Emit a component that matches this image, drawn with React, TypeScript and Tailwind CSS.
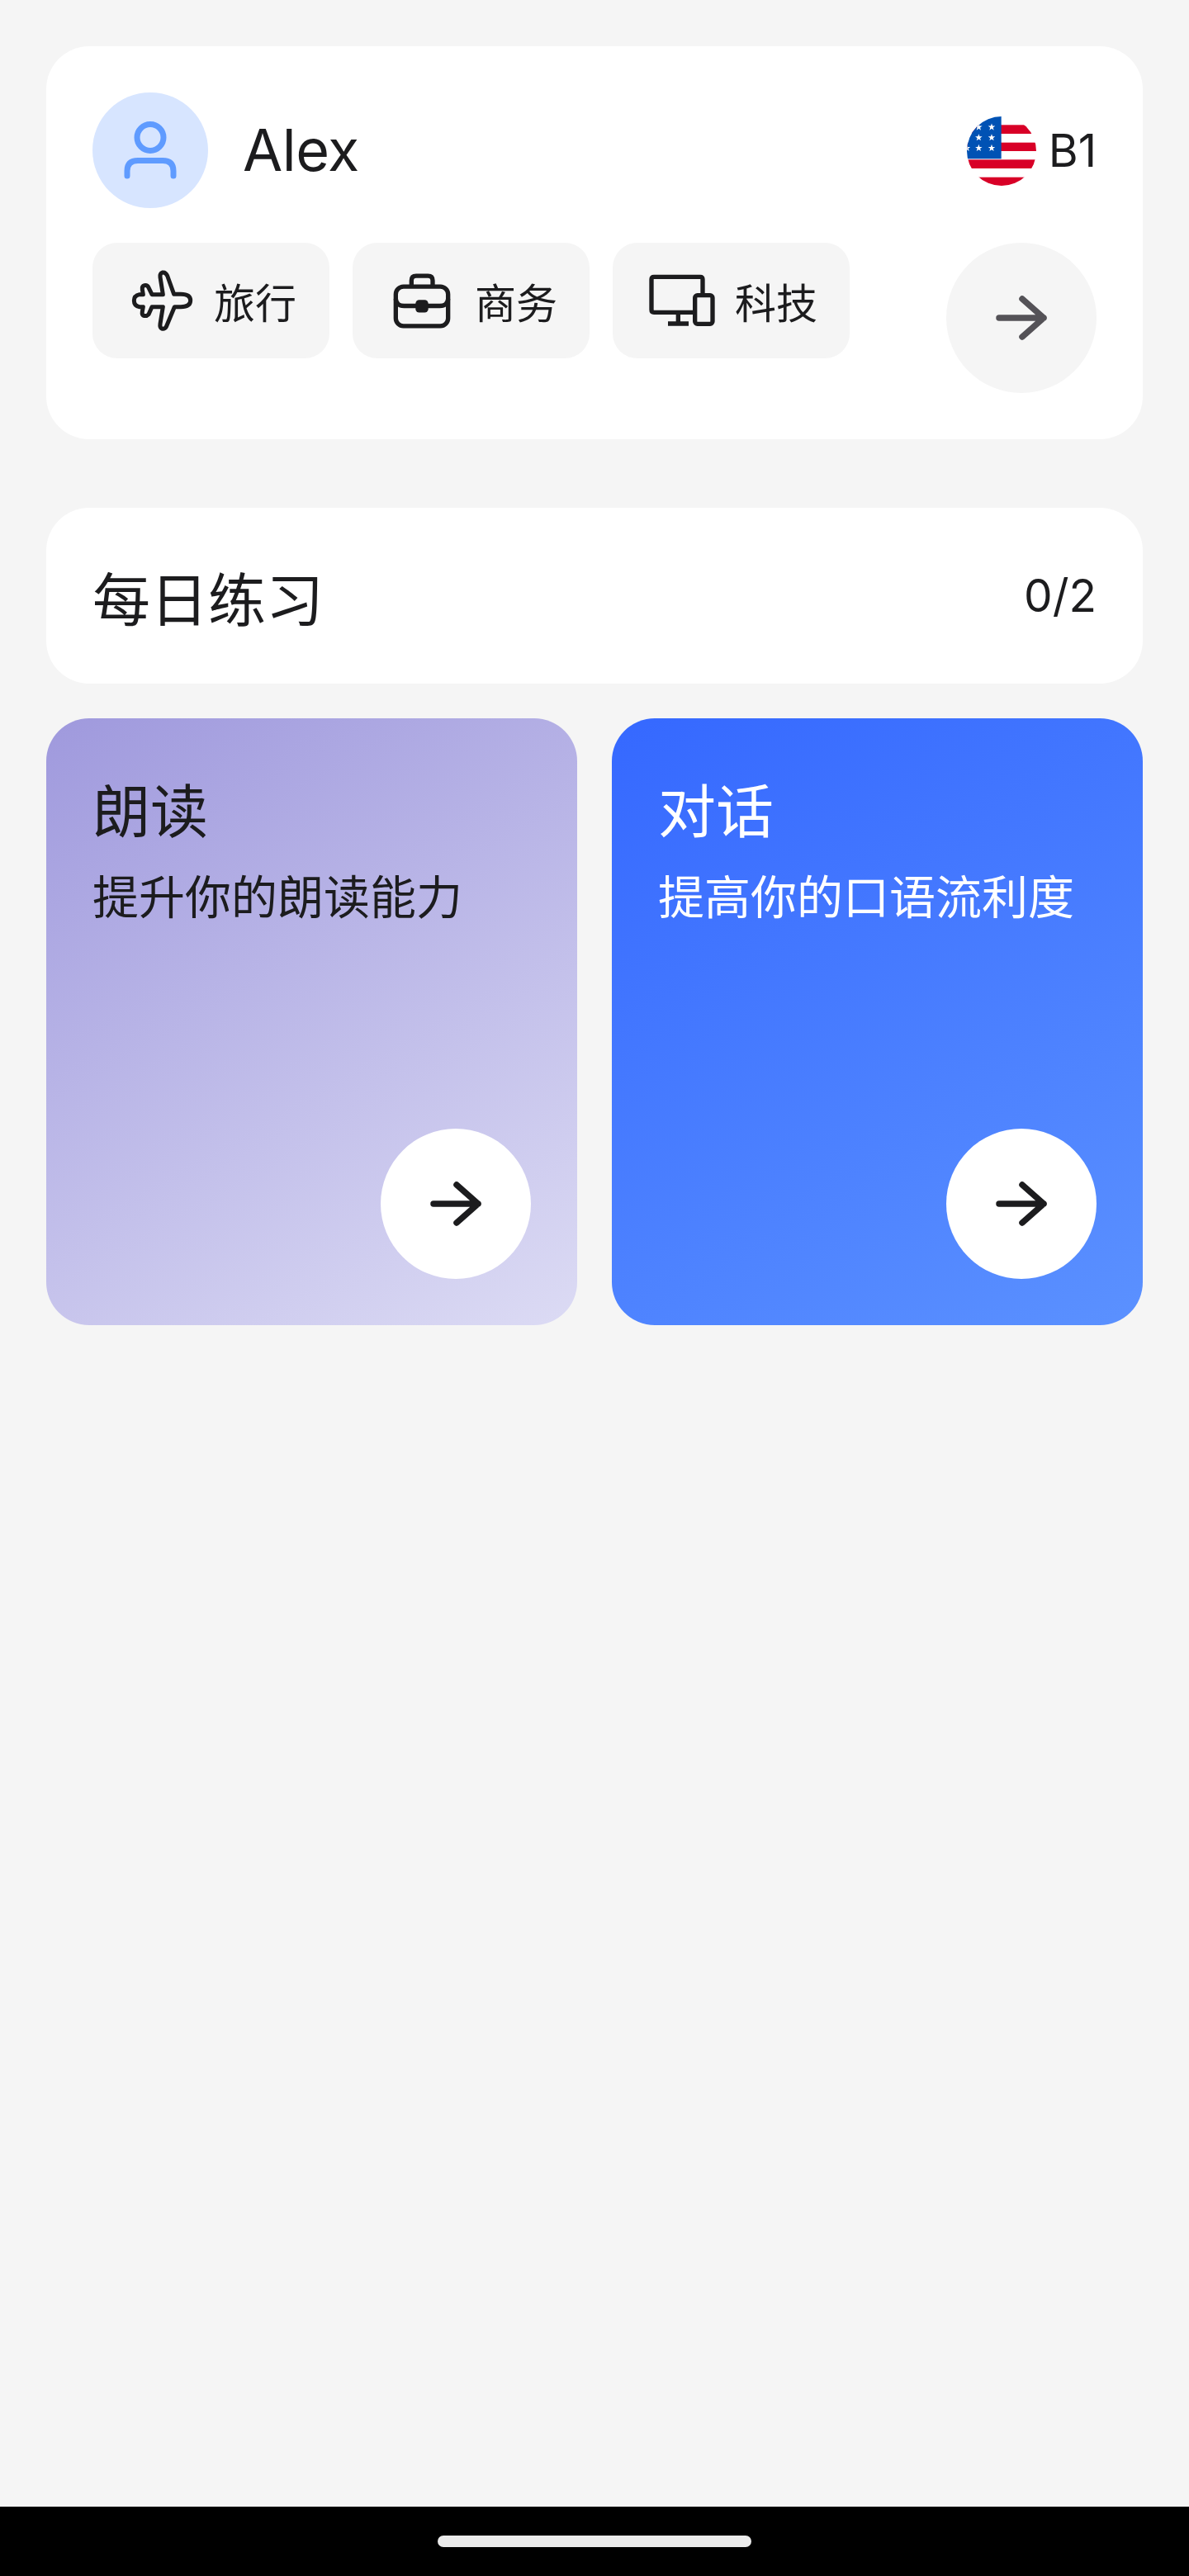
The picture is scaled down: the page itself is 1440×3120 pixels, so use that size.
function ArrowIcon({ className }: { className: string }) {
  return (
    <svg viewBox="0 0 62 54" className={className} fill="none" stroke="currentColor" strokeWidth="7.5" strokeLinecap="round" strokeLinejoin="round">
      <path d="M4 27H58M32 4 58 27 32 50" />
    </svg>
  )
}

function PersonIcon() {
  return (
    <svg viewBox="0 0 64 70" className="w-[64px] h-[70px]" fill="none" stroke="#5f9bff" strokeWidth="7" strokeLinecap="round">
      <circle cx="32" cy="19.5" r="16" />
      <path d="M4 66V60Q4 47.5 17 47.5H47Q60 47.5 60 60V66" />
    </svg>
  )
}

function PlaneIcon() {
  return (
    <svg viewBox="52 46 228 228" className="w-[76px] h-[76px] shrink-0" fill="none" stroke="#1c1c1e" strokeWidth="15" strokeLinejoin="round">
      <path d="M210 137H235Q270 137 270 160T235 183H212L182 255Q176 265 166 262 158 258 160 245L170 183H130L118 210Q110 218 100 215 93 212 95 200L98 183H85Q65 180 65 160 65 142 85 138H98L95 120Q93 108 103 105 113 103 118 113L130 138H170L160 75Q158 62 168 58 180 56 186 70Z" />
    </svg>
  )
}

function BriefcaseIcon() {
  return (
    <svg viewBox="78 58 210 200" className="w-[70px] h-[67px] shrink-0" fill="none" stroke="#1c1c1e" strokeWidth="16" strokeLinejoin="round">
      <rect x="88" y="106" width="190" height="143" rx="28" />
      <path d="M145 106V84Q145 67 162 67H205Q222 67 222 84V106" />
      <path d="M88 150Q90 176 118 176H248Q276 176 278 150" />
      <rect x="160" y="154" width="46" height="46" rx="13" fill="#1c1c1e" stroke="none" />
    </svg>
  )
}

function DevicesIcon() {
  return (
    <svg viewBox="78 80 240 192" className="w-[80px] h-[64px] shrink-0" fill="none" stroke="#1c1c1e" strokeWidth="16" strokeLinejoin="round">
      <path d="M238 219H96Q87 219 87 210V99Q87 90 96 90H264Q273 90 273 99V156" />
      <path d="M184 219V260M147 260H222" />
      <rect x="245" y="157" width="64" height="104" rx="9" />
    </svg>
  )
}

const starRows = [98, 136, 174]
const starCols = [90, 133, 180]

function FlagIcon() {
  return (
    <svg viewBox="90 59 252 252" className="w-[84px] h-[84px] shrink-0">
      <defs>
        <clipPath id="flag-clip">
          <circle cx="216" cy="185" r="126" />
        </clipPath>
      </defs>
      <g clipPath="url(#flag-clip)">
        <rect x="90" y="59" width="252" height="252" fill="#ffffff" />
        <rect x="90" y="90" width="252" height="32" fill="#d80027" />
        <rect x="90" y="154" width="252" height="31" fill="#d80027" />
        <rect x="90" y="216" width="252" height="32" fill="#d80027" />
        <rect x="90" y="280" width="252" height="31" fill="#d80027" />
        <rect x="90" y="59" width="125" height="154" fill="#0052b4" />
        {starRows.map((y) =>
          starCols.map((x) => (
            <polygon
              key={`${x}-${y}`}
              fill="#ffffff"
              transform={`translate(${x} ${y}) scale(1.35)`}
              points="0,-10 2.4,-3.2 9.5,-3.1 3.8,1.2 5.9,8.1 0,4 -5.9,8.1 -3.8,1.2 -9.5,-3.1 -2.4,-3.2"
            />
          )),
        )}
      </g>
    </svg>
  )
}

const topics = [
  { label: '旅行', icon: <PlaneIcon />, spacing: 'pl-[46px] gap-[25px]' },
  { label: '商务', icon: <BriefcaseIcon />, spacing: 'pl-[49px] gap-[29px]' },
  { label: '科技', icon: <DevicesIcon />, spacing: 'pl-[44px] gap-[24px]' },
]

export default function App() {
  return (
    <div className="h-[3120px] flex flex-col bg-[#f5f5f5] text-[#1c1c1e] font-['Inter','Noto_Sans_CJK_SC',sans-serif]">
      <main className="flex-1 px-[56px] pt-[56px]">
        <section className="bg-white rounded-[52px] p-[56px]">
          <div className="flex items-center justify-between h-[140px]">
            <div className="flex items-center gap-[42px]">
              <div className="w-[140px] h-[140px] rounded-full bg-[#d7e5ff] flex items-center justify-center">
                <PersonIcon />
              </div>
              <span className="text-[70px] leading-none tracking-[-0.5px]">Alex</span>
            </div>
            <div className="flex items-center gap-[15px] pt-[1px]">
              <FlagIcon />
              <span className="text-[55px] leading-none">B1</span>
            </div>
          </div>
          <div className="flex items-start justify-between mt-[42px]">
            <div className="flex gap-[28px]">
              {topics.map((t) => (
                <div key={t.label} className={`w-[287px] h-[140px] rounded-[30px] bg-[#f5f5f5] flex items-center ${t.spacing}`}>
                  {t.icon}
                  <span className="pt-[8px] text-[50px] leading-none">{t.label}</span>
                </div>
              ))}
            </div>
            <div className="w-[182px] h-[182px] rounded-full bg-[#f5f5f5] flex items-center justify-center text-[#545257]">
              <ArrowIcon className="w-[62px] h-[54px]" />
            </div>
          </div>
        </section>

        <section className="mt-[83px] h-[213px] bg-white rounded-[52px] px-[56px] flex items-center justify-between">
          <h2 className="pt-[12px] text-[70px] leading-none font-normal">每日练习</h2>
          <span className="text-[55px] leading-none">0/2</span>
        </section>

        <div className="mt-[42px] grid grid-cols-2 gap-[42px]">
          <section className="relative h-[735px] rounded-[52px] px-[56px] pt-[72px] bg-[linear-gradient(150deg,#9f99dd_0%,#dcdbf4_100%)]">
            <h3 className="text-[70px] leading-[84px] font-normal">朗读</h3>
            <p className="mt-[25px] text-[56px] leading-[72px]">提升你的朗读能力</p>
            <div className="absolute right-[56px] bottom-[56px] w-[182px] h-[182px] rounded-full bg-white flex items-center justify-center">
              <ArrowIcon className="w-[62px] h-[54px]" />
            </div>
          </section>
          <section className="relative h-[735px] rounded-[52px] px-[56px] pt-[72px] text-white bg-[linear-gradient(150deg,#3568ff_0%,#5b91ff_100%)]">
            <h3 className="text-[70px] leading-[84px] font-normal">对话</h3>
            <p className="mt-[25px] text-[56px] leading-[72px]">提高你的口语流利度</p>
            <div className="absolute right-[56px] bottom-[56px] w-[182px] h-[182px] rounded-full bg-white flex items-center justify-center text-[#1c1c1e]">
              <ArrowIcon className="w-[62px] h-[54px]" />
            </div>
          </section>
        </div>
      </main>
      <footer className="h-[84px] bg-black flex justify-center pt-[35px]">
        <div className="w-[380px] h-[14px] rounded-full bg-[#ebebeb]" />
      </footer>
    </div>
  )
}
